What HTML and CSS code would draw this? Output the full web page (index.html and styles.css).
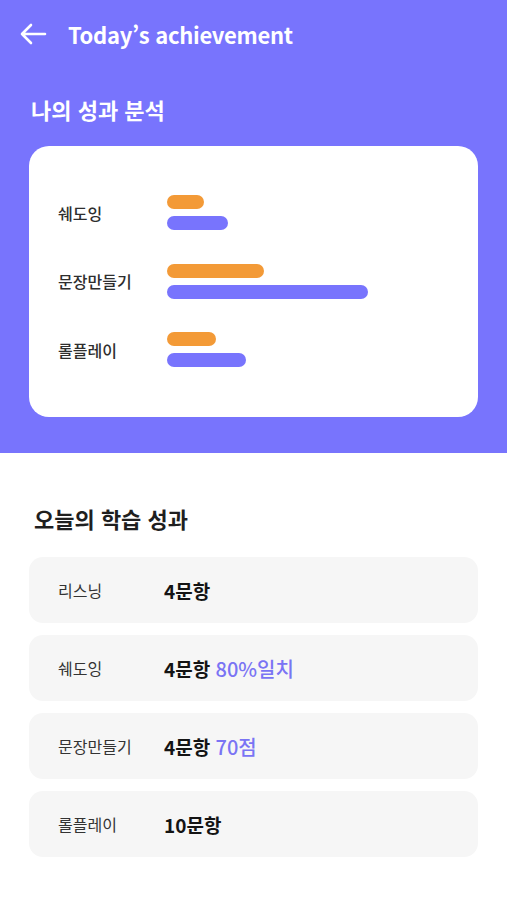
FILE: index.html
```html
<!DOCTYPE html>
<html lang="ko">

<head>
    <meta charset="UTF-8">
    <meta name="viewport" content="width=device-width, initial-scale=1.0">
    <title>Today's achievement</title>
    <link rel="stylesheet" href="styles.css">
</head>

<body>
    <div class="top">
        <div class="app-bar">
            <svg class="back" width="28" height="22" viewBox="0 0 28 22">
                <path d="M26 11H3M12 2L3 11l9 9" fill="none" stroke="#fff" stroke-width="2.6" stroke-linecap="round" stroke-linejoin="round"/>
            </svg>
            <h1>Today’s achievement</h1>
        </div>
        <h2 class="top-title">나의 성과 분석</h2>
        <div class="chart-card">
            <div class="chart-row">
                <span class="chart-label">쉐도잉</span>
                <div class="bars">
                    <div class="bar orange" style="width: 37px"></div>
                    <div class="bar purple" style="width: 61px"></div>
                </div>
            </div>
            <div class="chart-row">
                <span class="chart-label">문장만들기</span>
                <div class="bars">
                    <div class="bar orange" style="width: 97px"></div>
                    <div class="bar purple" style="width: 201px"></div>
                </div>
            </div>
            <div class="chart-row">
                <span class="chart-label">롤플레이</span>
                <div class="bars">
                    <div class="bar orange" style="width: 49px"></div>
                    <div class="bar purple" style="width: 79px"></div>
                </div>
            </div>
        </div>
    </div>

    <div class="content">
        <h2 class="section-title">오늘의 학습 성과</h2>
        <div class="result-list">
            <div class="result">
                <span class="result-label">리스닝</span>
                <span class="result-value">4문항</span>
            </div>
            <div class="result">
                <span class="result-label">쉐도잉</span>
                <span class="result-value">4문항 <em>80%일치</em></span>
            </div>
            <div class="result">
                <span class="result-label">문장만들기</span>
                <span class="result-value">4문항 <em>70점</em></span>
            </div>
            <div class="result">
                <span class="result-label">롤플레이</span>
                <span class="result-value">10문항</span>
            </div>
        </div>
    </div>
</body>

</html>
```

FILE: styles.css
```css
body {
    margin: 0;
    background-color: #ffffff;
    color: #222222;
    font-family: 'Noto Sans CJK KR', 'Noto Sans', sans-serif;
}

h1, h2 {
    margin: 0;
}

/* purple header */
.top {
    background-color: #7874fd;
    padding: 0 29px 36px;
}

.app-bar {
    display: flex;
    align-items: center;
    height: 68px;
    margin-left: -10px;
}

.back {
    margin-right: 21px;
}

.app-bar h1 {
    color: #ffffff;
    font-size: 22px;
    font-weight: 700;
    letter-spacing: -0.3px;
}

.top-title {
    color: #ffffff;
    font-size: 22px;
    font-weight: 700;
    margin: 26px 0 22px 2px;
    line-height: 30px;
}

.chart-card {
    background: #ffffff;
    border-radius: 20px;
    height: 271px;
    box-sizing: border-box;
    padding: 49px 29px 0;
    display: flex;
    flex-direction: column;
    gap: 33.5px;
}

.chart-row {
    display: flex;
    align-items: center;
}

.chart-label {
    width: 109px;
    font-size: 16px;
    font-weight: 500;
    color: #2e2e2e;
}

.bars {
    display: flex;
    flex-direction: column;
    gap: 7px;
}

.bar {
    height: 14px;
    border-radius: 7px;
}

.orange {
    background-color: #f39a37;
}

.purple {
    background-color: #7874fd;
}

/* results */
.content {
    padding: 50px 29px 0;
}

.section-title {
    font-size: 22px;
    font-weight: 700;
    color: #1f1f1f;
    margin-left: 5px;
    line-height: 30px;
}

.result-list {
    margin-top: 24px;
    display: flex;
    flex-direction: column;
    gap: 12px;
}

.result {
    display: flex;
    align-items: center;
    height: 66px;
    padding-left: 29px;
    background-color: #f6f6f6;
    border-radius: 14px;
}

.result-label {
    width: 106px;
    font-size: 16px;
    color: #333333;
}

.result-value {
    font-size: 19px;
    font-weight: 700;
    color: #141414;
}

.result-value em {
    font-style: normal;
    font-weight: 500;
    font-size: 20px;
    color: #7a74f4;
}
```
